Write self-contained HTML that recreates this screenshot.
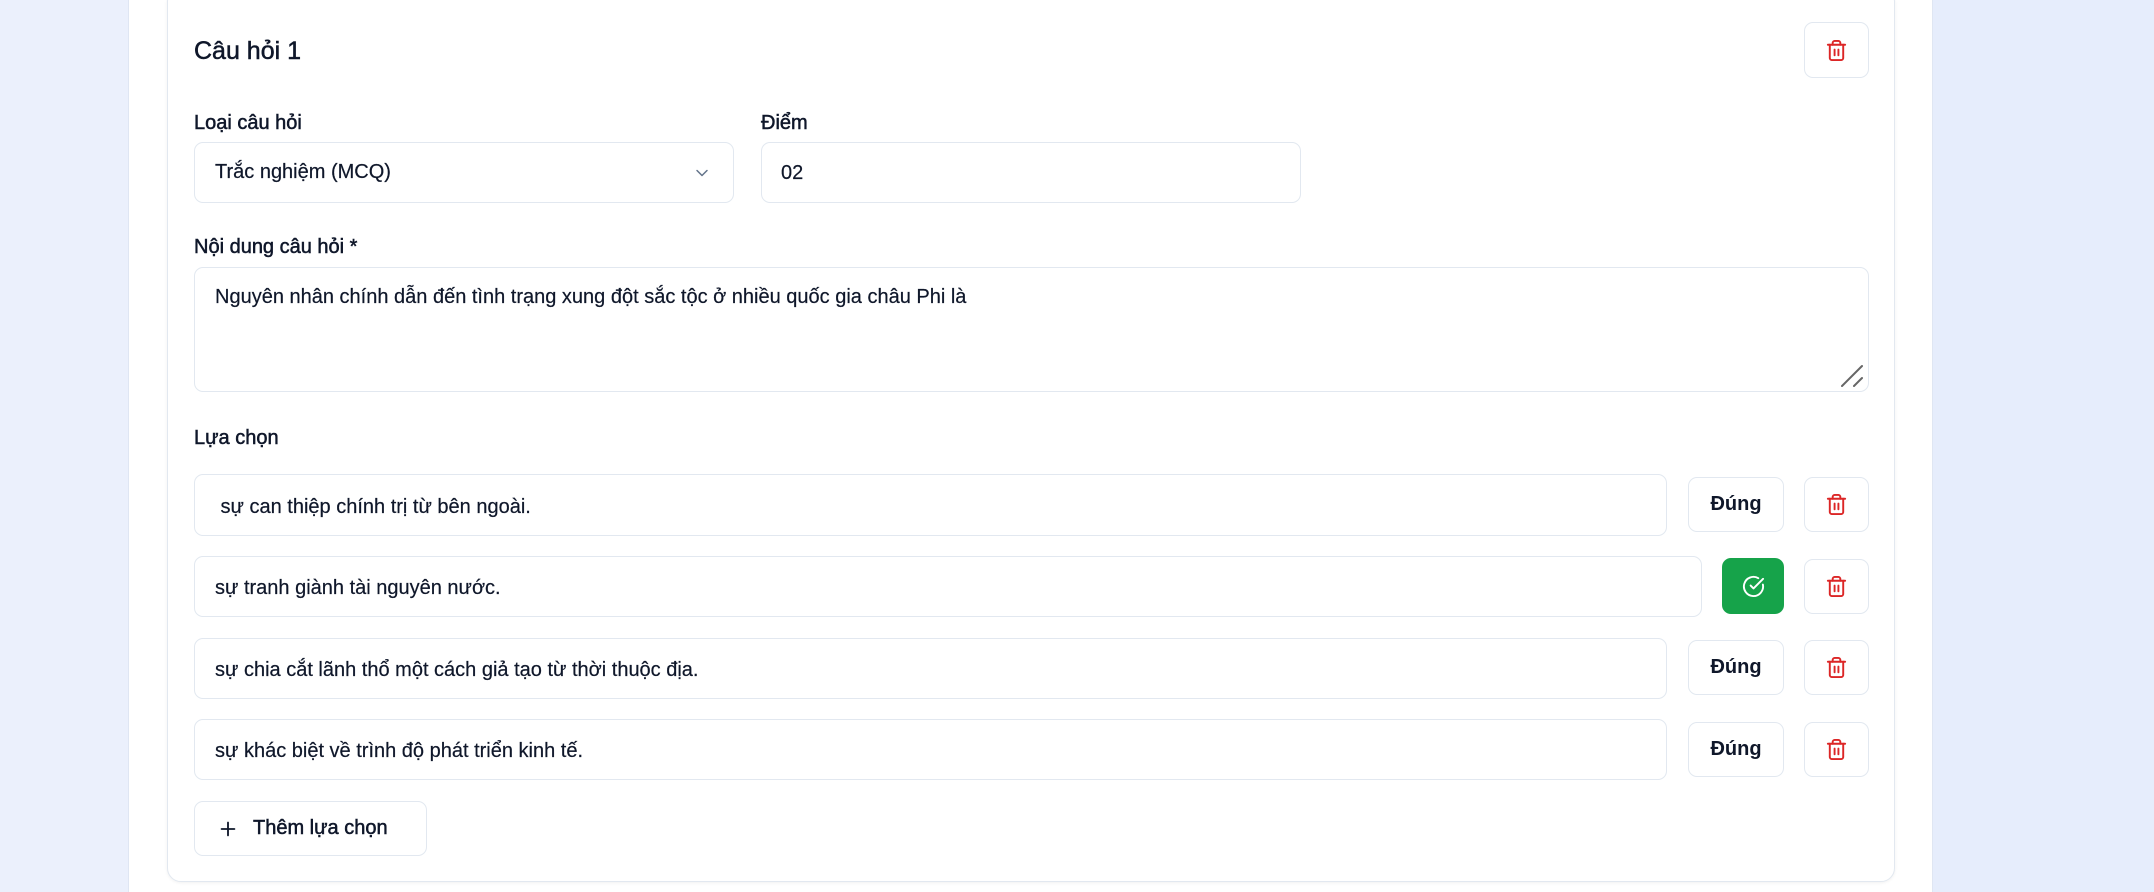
<!DOCTYPE html>
<html><head><meta charset="utf-8"><style>
*{box-sizing:border-box;margin:0;padding:0}
body{width:2154px;height:892px;overflow:hidden;background:#e6edfc;font-family:"Liberation Sans",sans-serif;color:#0f172a;position:relative}
.l{position:absolute;left:0;top:0;width:128px;height:892px;background:#ebf0fc}
.p{position:absolute;left:128px;top:0;width:1805px;height:892px;background:#fff;border-left:1px solid #dfe6f3;border-right:1px solid #dfe6f3}
.card{position:absolute;left:167px;top:-12px;width:1728px;height:894px;border:1.5px solid #e2e8f0;border-radius:14px;background:#fff;box-shadow:0 1px 3px rgba(0,0,0,.06)}
.a{position:absolute}
.box{position:absolute;border:1.5px solid #e2e8f0;border-radius:9px;background:#fff}
.t{position:absolute;font-size:20px;white-space:nowrap;-webkit-text-stroke:0.2px #0f172a}
.lab{position:absolute;font-size:20px;white-space:nowrap;-webkit-text-stroke:0.5px #0f172a}
.btn{position:absolute;border:1.5px solid #e2e8f0;border-radius:9px;background:#fff;display:flex;align-items:center;justify-content:center}
.dung{font-weight:bold;font-size:20px}
</style></head><body>
<div class="l"></div><div class="p"></div>
<div class="card"></div>
<div class="lab" style="left:194px;top:37px;font-size:25px">Câu hỏi 1</div>
<div class="btn" style="left:1804px;top:22px;width:65px;height:56px"><svg width="23" height="23" viewBox="0 0 24 24" fill="none" stroke="#dc2626" stroke-width="2" stroke-linecap="round" stroke-linejoin="round"><path d="M3 6h18"/><path d="M19 6v14c0 1-1 2-2 2H7c-1 0-2-1-2-2V6"/><path d="M8 6V4c0-1 1-2 2-2h4c1 0 2 1 2 2v2"/><line x1="10" y1="11" x2="10" y2="17"/><line x1="14" y1="11" x2="14" y2="17"/></svg></div>

<div class="lab" style="left:194px;top:112px">Loại câu hỏi</div>
<div class="box" style="left:194px;top:142px;width:540px;height:61px"></div>
<div class="t" style="left:215px;top:161px">Trắc nghiệm (MCQ)</div>
<svg class="a" style="left:692px;top:163px" width="20" height="20" viewBox="0 0 24 24" fill="none" stroke="#64748b" stroke-width="1.8" stroke-linecap="round" stroke-linejoin="round"><path d="m6 9 6 6 6-6"/></svg>

<div class="lab" style="left:761px;top:112px">Điểm</div>
<div class="box" style="left:761px;top:142px;width:540px;height:61px"></div>
<div class="t" style="left:781px;top:162px">02</div>

<div class="lab" style="left:194px;top:236px">Nội dung câu hỏi *</div>
<textarea class="box" style="left:194px;top:267px;width:1675px;height:125px;font-family:'Liberation Sans',sans-serif;font-size:20px;color:#0f172a;padding:18px 20px;outline:none;resize:none;-webkit-text-stroke:0.2px #0f172a">Nguyên nhân chính dẫn đến tình trạng xung đột sắc tộc ở nhiều quốc gia châu Phi là</textarea>
<svg class="a" style="left:1840px;top:364px" width="24" height="24" viewBox="0 0 24 24" stroke="#666" stroke-width="2" stroke-linecap="round"><path d="M2 22 22 2"/><path d="M14 22 22 14"/></svg>

<div class="lab" style="left:194px;top:427px">Lựa chọn</div>

<div class="box" style="left:194px;top:474px;width:1473px;height:62px"></div>
<div class="t" style="left:215px;top:496px">&nbsp;sự can thiệp chính trị từ bên ngoài.</div>
<div class="btn dung" style="left:1688px;top:477px;width:96px;height:55px">Đúng</div>
<div class="btn" style="left:1804px;top:477px;width:65px;height:55px"><svg width="23" height="23" viewBox="0 0 24 24" fill="none" stroke="#dc2626" stroke-width="2" stroke-linecap="round" stroke-linejoin="round"><path d="M3 6h18"/><path d="M19 6v14c0 1-1 2-2 2H7c-1 0-2-1-2-2V6"/><path d="M8 6V4c0-1 1-2 2-2h4c1 0 2 1 2 2v2"/><line x1="10" y1="11" x2="10" y2="17"/><line x1="14" y1="11" x2="14" y2="17"/></svg></div>

<div class="box" style="left:194px;top:556px;width:1508px;height:61px"></div>
<div class="t" style="left:215px;top:577px">sự tranh giành tài nguyên nước.</div>
<div class="btn" style="left:1722px;top:558px;width:62px;height:56px;background:#16a34a;border-color:#16a34a"><svg width="23" height="23" viewBox="0 0 24 24" fill="none" stroke="#fff" stroke-width="2" stroke-linecap="round" stroke-linejoin="round"><path d="M21.8 10A10 10 0 1 1 17 3.3"/><path d="m9 11 3 3L22 4"/></svg></div>
<div class="btn" style="left:1804px;top:559px;width:65px;height:55px"><svg width="23" height="23" viewBox="0 0 24 24" fill="none" stroke="#dc2626" stroke-width="2" stroke-linecap="round" stroke-linejoin="round"><path d="M3 6h18"/><path d="M19 6v14c0 1-1 2-2 2H7c-1 0-2-1-2-2V6"/><path d="M8 6V4c0-1 1-2 2-2h4c1 0 2 1 2 2v2"/><line x1="10" y1="11" x2="10" y2="17"/><line x1="14" y1="11" x2="14" y2="17"/></svg></div>

<div class="box" style="left:194px;top:638px;width:1473px;height:61px"></div>
<div class="t" style="left:215px;top:659px">sự chia cắt lãnh thổ một cách giả tạo từ thời thuộc địa.</div>
<div class="btn dung" style="left:1688px;top:640px;width:96px;height:55px">Đúng</div>
<div class="btn" style="left:1804px;top:640px;width:65px;height:55px"><svg width="23" height="23" viewBox="0 0 24 24" fill="none" stroke="#dc2626" stroke-width="2" stroke-linecap="round" stroke-linejoin="round"><path d="M3 6h18"/><path d="M19 6v14c0 1-1 2-2 2H7c-1 0-2-1-2-2V6"/><path d="M8 6V4c0-1 1-2 2-2h4c1 0 2 1 2 2v2"/><line x1="10" y1="11" x2="10" y2="17"/><line x1="14" y1="11" x2="14" y2="17"/></svg></div>

<div class="box" style="left:194px;top:719px;width:1473px;height:61px"></div>
<div class="t" style="left:215px;top:740px">sự khác biệt về trình độ phát triển kinh tế.</div>
<div class="btn dung" style="left:1688px;top:722px;width:96px;height:55px">Đúng</div>
<div class="btn" style="left:1804px;top:722px;width:65px;height:55px"><svg width="23" height="23" viewBox="0 0 24 24" fill="none" stroke="#dc2626" stroke-width="2" stroke-linecap="round" stroke-linejoin="round"><path d="M3 6h18"/><path d="M19 6v14c0 1-1 2-2 2H7c-1 0-2-1-2-2V6"/><path d="M8 6V4c0-1 1-2 2-2h4c1 0 2 1 2 2v2"/><line x1="10" y1="11" x2="10" y2="17"/><line x1="14" y1="11" x2="14" y2="17"/></svg></div>

<div class="btn" style="left:194px;top:801px;width:233px;height:55px;justify-content:flex-start;padding-left:22px;font-size:20px;-webkit-text-stroke:0.5px #0f172a"><svg width="22" height="22" viewBox="0 0 24 24" fill="none" stroke="#0f172a" stroke-width="2" stroke-linecap="round"><path d="M5 12h14"/><path d="M12 5v14"/></svg><span style="margin-left:14px">Thêm lựa chọn</span></div>
</body></html>
